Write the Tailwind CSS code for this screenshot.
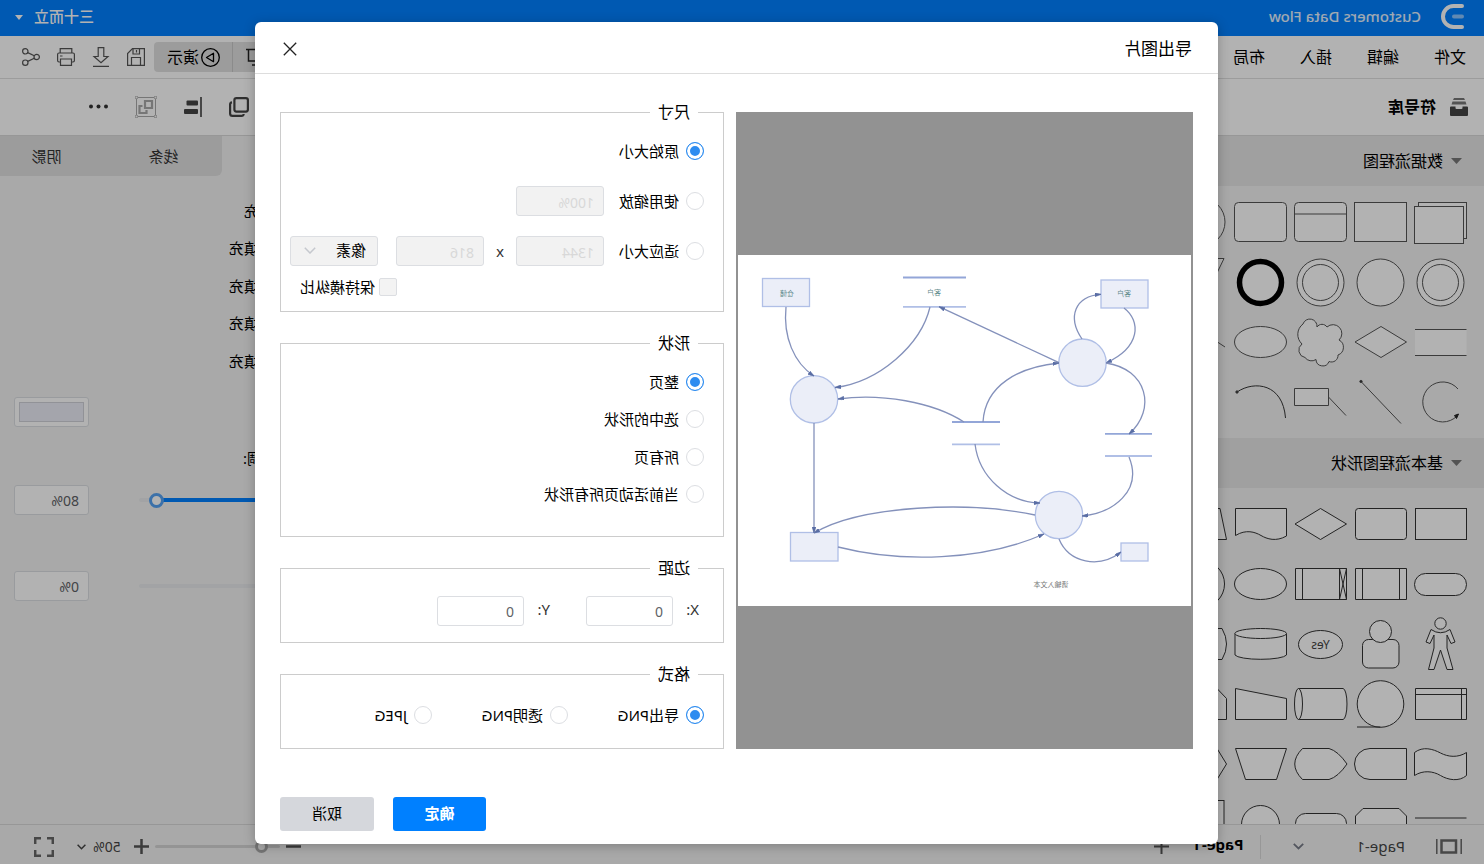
<!DOCTYPE html>
<html lang="zh-CN">
<head>
<meta charset="utf-8">
<meta name="viewport" content="width=device-width, initial-scale=1">
<title>导出图片</title>
<script src="https://cdn.jsdelivr.net/npm/@tailwindcss/browser@4"></script>
</head>
<body class="font-['Noto_Sans','Noto_Sans_CJK_SC',sans-serif] text-[15px] text-black">
<div class="relative flex h-screen -scale-x-100 flex-col overflow-hidden bg-white">

  <!-- Title bar -->
  <header class="flex h-9 shrink-0 items-center bg-[#0080ff] pr-[15px] pb-1 pl-5 text-white">
    <svg class="h-[25px] w-[23px]" viewBox="0 0 23 25" fill="none" stroke-linecap="round" stroke-width="4"><path d="M2 2H10.500A10.500 10.500 0 0 1 10.500 23H2" stroke="#fff"/><path d="M2 12.500H10" stroke="#8cc4ff"/></svg>
    <h1 class="ml-5 text-[15px] font-medium text-white/90">Customers Data Flow</h1>
    <button type="button" class="ml-auto flex items-center gap-[11px] font-medium">三十而立
      <svg class="mt-[3px] h-[5px] w-2" viewBox="0 0 8 5" fill="#fff"><path d="M0 0H8L4 5Z"/></svg>
    </button>
  </header>

  <!-- Menu bar -->
  <nav class="flex h-[43px] shrink-0 items-center border-b border-[#e0e0e0] pr-[22px] pl-[18px]">
    <div class="flex gap-[35px] text-base">
      <a href="#">文件</a><a href="#">编辑</a><a href="#">插入</a><a href="#">布局</a>
    </div>
    <div class="ml-auto flex h-[30px] overflow-hidden rounded bg-[#e0e0e0]">
      <button type="button" aria-label="放映" class="flex items-center border-r border-[#c8c8c8] pr-[13px] pl-3">
        <svg class="size-5" viewBox="0 0 20 20" fill="none" stroke="#222" stroke-width="1.500"><path d="M0 2.500H20M2.500 2.500V14H17.500V2.500M10 14V18M6 18H14"/></svg>
      </button>
      <button type="button" class="flex items-center gap-[2px] pr-[13px] pl-3 text-base">
        <svg class="size-[19px]" viewBox="0 0 19 19" fill="none" stroke="#000" stroke-width="1.300"><circle cx="9.500" cy="9.500" r="8.800"/><path d="M6.500 5.300V13.700L13.500 9.500Z" stroke-linejoin="round"/></svg>演示
      </button>
    </div>
    <div class="ml-[9px] flex gap-[17px]">
      <button type="button" aria-label="保存"><svg class="block size-[18px]" viewBox="0 0 18 18" fill="none" stroke="#555" stroke-width="1.200"><path d="M.6 .6H12.500L17.400 5.500V17.400H.6Z"/><path d="M5.500 .6V6H12V.6M8.500 2V4.500M4.500 17.400V9.500H13.500V17.400"/></svg></button>
      <button type="button" aria-label="下载"><svg class="block h-5 w-[18px]" viewBox="0 0 18 20" fill="none" stroke="#555" stroke-width="1.200"><path d="M6.200 .6H11.800V9.500H16L9 15.800L2 9.500H6.200Z M1 19.300H17"/></svg></button>
      <button type="button" aria-label="打印"><svg class="block size-[18px]" viewBox="0 0 18 18" fill="none" stroke="#555" stroke-width="1.200"><path d="M3.200 5V.6H14.800V5M3.500 14H2A1.400 1.400 0 0 1 .6 12.600V6.400A1.400 1.400 0 0 1 2 5H16A1.400 1.400 0 0 1 17.400 6.400V12.600A1.400 1.400 0 0 1 16 14H14.500M3.500 11H14.500V17.400H3.500Z M12.500 8H15"/></svg></button>
      <button type="button" aria-label="分享"><svg class="block size-[18px]" viewBox="0 0 18 18" fill="none" stroke="#555" stroke-width="1.200"><circle cx="3.300" cy="9" r="2.700"/><circle cx="14.700" cy="3.300" r="2.700"/><circle cx="14.700" cy="14.700" r="2.700"/><path d="M5.700 7.800L12.300 4.600M5.700 10.200L12.300 13.400"/></svg></button>
    </div>
  </nav>

  <!-- Tool bar -->
  <div class="flex h-[57px] shrink-0 items-center border-b border-[#d8d8d8] pr-[89px] pl-4">
    <svg class="size-[18px]" viewBox="0 0 18 18" fill="#444"><path d="M4 0H14L15 2H3Z" fill="#777"/><path d="M2.500 3.500H15.500L16.500 6.500H1.500Z" fill="#777"/><path d="M1 8.500H5.500V10Q5.500 11 6.500 11H11.500Q12.500 11 12.500 10V8.500H17Q18 8.500 18 9.500V17Q18 18 17 18H1Q0 18 0 17V9.500Q0 8.500 1 8.500Z"/></svg>
    <h2 class="ml-[14px] text-base font-bold">符号库</h2>
    <div class="ml-auto flex items-center gap-[27px]">
      <button type="button" aria-label="层叠"><svg class="block size-5" viewBox="0 0 20 20" fill="none" stroke="#444" stroke-width="2.200"><rect x="1.100" y="1.100" width="13.500" height="13.500" rx="2"/><path d="M17 5.300Q18.900 5.500 18.900 7.500V16.500Q18.900 18.900 16.500 18.900H7.500Q5.500 18.900 5.300 17"/></svg></button>
      <button type="button" aria-label="对齐"><svg class="block h-5 w-[18px]" viewBox="0 0 18 20" fill="#444"><path d="M0 0H2V20H0Z" fill="#666"/><rect x="4" y="3.500" width="11.500" height="5" rx="1"/><rect x="4" y="12" width="14" height="5" rx="1"/></svg></button>
      <button type="button" aria-label="组合"><svg class="block size-[22px]" viewBox="0 0 22 22" fill="none" stroke="#aaa"><path d="M3 1.500H19M3 20.500H19M1.500 3V19M20.500 3V19"/><circle cx="1.500" cy="1.500" r="1.300"/><circle cx="20.500" cy="1.500" r="1.300"/><circle cx="1.500" cy="20.500" r="1.300"/><circle cx="20.500" cy="20.500" r="1.300"/><path d="M5 5H12V12H5Z M14.500 10H17.500V17H10.500V14" stroke-width="2.200"/></svg></button>
      <button type="button" aria-label="更多"><svg class="block h-5 w-[19px]" viewBox="0 0 19 20" fill="#333"><circle cx="2" cy="9.500" r="2"/><circle cx="9.500" cy="9.500" r="2"/><circle cx="17" cy="9.500" r="2"/></svg></button>
    </div>
  </div>

  <main class="flex min-h-0 flex-1">
    <!-- Symbol library -->
    <aside class="w-[326px] shrink-0 overflow-hidden bg-[#f3f3f3]">
      <h3 class="flex h-[50px] items-center gap-2 bg-[#e5e5e5] pl-[22px] text-base">
        <svg class="h-[6px] w-[11px]" viewBox="0 0 11 6" fill="#777"><path d="M0 0H11L5.500 6Z"/></svg>数据流程图
      </h3>
      <div class="grid grid-cols-[repeat(5,60px)] py-[6px] pl-[13px] [&_svg]:size-[60px] [&_svg]:fill-white [&_svg]:stroke-[#555]">
        <svg viewBox="0 0 60 60"><rect x="4.500" y="10.500" width="48" height="36"/><rect x="7.500" y="14.500" width="49" height="37"/></svg>
        <svg viewBox="0 0 60 60"><rect x="4.500" y="10.500" width="52" height="39"/></svg>
        <svg viewBox="0 0 60 60"><rect x="4.500" y="10.500" width="52" height="39" rx="4"/><path d="M4.500 22H56.500"/></svg>
        <svg viewBox="0 0 60 60"><rect x="4.500" y="10.500" width="52" height="39" rx="4"/></svg>
        <svg viewBox="0 0 60 60"><circle cx="30" cy="30" r="24"/></svg>

        <svg viewBox="0 0 60 60"><circle cx="30.500" cy="30.500" r="23.500"/><circle cx="30.500" cy="30.500" r="18"/></svg>
        <svg viewBox="0 0 60 60"><circle cx="30.500" cy="30.500" r="23.500"/></svg>
        <svg viewBox="0 0 60 60"><circle cx="30.500" cy="30.500" r="23.500"/><circle cx="30.500" cy="30.500" r="18"/></svg>
        <svg viewBox="0 0 60 60"><circle cx="30.500" cy="30.500" r="21" stroke="#000" stroke-width="5.500"/></svg>
        <svg viewBox="0 0 60 60"><path d="M7 6.500H53L30 54Z"/></svg>

        <svg viewBox="0 0 60 60"><path d="M4.500 17.500H56V43.500H4.500Z" stroke="none"/><path d="M4.500 17.500H56M4.500 43.500H56"/></svg>
        <svg viewBox="0 0 60 60"><path d="M30 14.500L56 30L30 45.500L4.500 30Z"/></svg>
        <svg viewBox="0 0 60 60"><path d="M34 15A7.200 7.200 0 0 1 48 12A13 13 0 0 1 49 32A7.500 7.500 0 0 1 46 45.500A8 8 0 0 1 35 47.500A6.700 6.700 0 0 1 22 49.500A6.500 6.500 0 0 1 13 43A8.200 8.200 0 0 1 12 28A8.500 8.500 0 0 1 24 15A6 6 0 0 1 34 15Z"/></svg>
        <svg viewBox="0 0 60 60"><ellipse cx="30.500" cy="30" rx="26" ry="15.500"/></svg>
        <svg viewBox="0 0 60 60"><path d="M6 35L50 6" fill="none"/></svg>

        <svg viewBox="0 0 60 60"><path d="M13 17A20 20 0 1 1 14 44" fill="none"/><path d="M12.500 42L16.500 43.500L14.500 46.500Z" fill="#222" stroke="#222"/></svg>
        <svg viewBox="0 0 60 60"><path d="M50 9.500L10 51.500"/><circle cx="50" cy="9.500" r="1.200" fill="#333"/></svg>
        <svg viewBox="0 0 60 60"><path d="M22.500 16.500H56.500V33.500H22.500ZM22.500 25L5 43.500"/></svg>
        <svg viewBox="0 0 60 60"><path d="M54 20C36 8 8 12 5.500 46" fill="none" stroke="#333"/><circle cx="54" cy="20" r="1.200" fill="#222"/></svg>
        <svg viewBox="0 0 60 60"></svg>
      </div>

      <h3 class="flex h-[50px] items-center gap-2 bg-[#e5e5e5] pl-[22px] text-base">
        <svg class="h-[6px] w-[11px]" viewBox="0 0 11 6" fill="#777"><path d="M0 0H11L5.500 6Z"/></svg>基本流程图形状
      </h3>
      <div class="grid grid-cols-[repeat(5,60px)] py-[6px] pl-[13px] [&_svg]:size-[60px] [&_svg]:fill-white [&_svg]:stroke-[#333]">
        <svg viewBox="0 0 60 60"><rect x="4.500" y="14.500" width="51" height="31"/></svg>
        <svg viewBox="0 0 60 60"><rect x="4.500" y="14.500" width="51" height="31" rx="3"/></svg>
        <svg viewBox="0 0 60 60"><path d="M30.500 14.500L56 30L30.500 45.500L4.500 30Z"/></svg>
        <svg viewBox="0 0 60 60"><path d="M4.500 14.500H55.500V41.500C45 35 36 38 30 41.500S15 48 4.500 42Z"/></svg>
        <svg viewBox="0 0 60 60"><path d="M11 14.500H49L55.500 45.500H4.500Z"/></svg>

        <svg viewBox="0 0 60 60"><rect x="4.500" y="19.500" width="52" height="22" rx="11"/></svg>
        <svg viewBox="0 0 60 60"><path d="M4.500 14.500H55.500V45.500H4.500ZM11.500 14.500V45.500M48.500 14.500V45.500"/></svg>
        <svg viewBox="0 0 60 60"><path d="M4.500 14.500H55.500V45.500H4.500ZM11.500 14.500V45.500M48.500 14.500V45.500M4.500 14.500L11.500 45.500M11.500 14.500L4.500 45.500"/></svg>
        <svg viewBox="0 0 60 60"><ellipse cx="30.500" cy="30" rx="26" ry="15.500"/></svg>
        <svg viewBox="0 0 60 60"><circle cx="30" cy="30" r="23.500"/></svg>

        <svg viewBox="0 0 60 60"><circle cx="30.500" cy="9.500" r="5.700"/><path d="M21 15.500Q30.500 22 40 15.500L45 28L41 29.500L37 21L37 34L42.500 55.500H37L30.500 36L24 55.500H18L24 34V21L20 29.500L16 28Z"/></svg>
        <svg viewBox="0 0 60 60"><rect x="12" y="25.500" width="36.500" height="28.500" rx="6"/><circle cx="30.500" cy="17.500" r="11"/></svg>
        <svg viewBox="0 0 60 60"><ellipse cx="30.500" cy="30.500" rx="22" ry="14"/><text x="30.500" y="35" text-anchor="middle" font-size="12" fill="#444" stroke="none">Yes</text></svg>
        <svg viewBox="0 0 60 60"><path d="M4.500 19.500V41A26 5 0 0 0 56 41V19.500"/><ellipse cx="30.300" cy="19.500" rx="25.800" ry="5"/></svg>
        <svg viewBox="0 0 60 60"><path d="M9 14.500Q0 30 9 45.500H51Q60 30 51 14.500Z"/></svg>

        <svg viewBox="0 0 60 60"><path d="M4.500 14.500H55.500V45.500H4.500ZM4.500 20.500H55.500M9.500 14.500V45.500"/></svg>
        <svg viewBox="0 0 60 60"><circle cx="30.500" cy="30" r="23.300"/><path d="M30.500 53H54"/></svg>
        <svg viewBox="0 0 60 60"><path d="M8 14.500H52.500V45.500H8A4 15.500 0 0 1 8 14.500Z"/><ellipse cx="52.500" cy="30" rx="4" ry="15.500"/></svg>
        <svg viewBox="0 0 60 60"><path d="M55.500 14.500L4.500 24.500V45.500H55.500Z"/></svg>
        <svg viewBox="0 0 60 60"><path d="M14 14.500H46L55.500 24.500V45.500H4.500V24.500Z"/></svg>

        <svg viewBox="0 0 60 60"><path d="M4.500 18.500C13 24 23 23 30.500 19S48 12 56.500 18.500V41.500C48 36 38 37 30.500 41.500S12 48 4.500 41.500Z"/></svg>
        <svg viewBox="0 0 60 60"><path d="M4.500 14.500H41A15.500 15.500 0 0 1 41 45.500H4.500Z"/></svg>
        <svg viewBox="0 0 60 60"><path d="M22 14.500H48.500Q64 30 48.500 45.500H22Q13 43 4 30Q13 17 22 14.500Z"/></svg>
        <svg viewBox="0 0 60 60"><path d="M4.500 14.500H55.500L45.500 45.500H14.500Z"/></svg>
        <svg viewBox="0 0 60 60"><path d="M4.500 30L14 14.500H46L55.500 30L46 45.500H14Z"/></svg>

        <svg viewBox="0 0 60 60"><path d="M4.500 24H56"/></svg>
        <svg viewBox="0 0 60 60"><path d="M12 14.500H48L55.500 22V45.500H4.500V22Z"/></svg>
        <svg viewBox="0 0 60 60"><rect x="4.500" y="19.500" width="51" height="26" rx="10"/></svg>
        <svg viewBox="0 0 60 60"><circle cx="30.500" cy="30.500" r="19"/></svg>
        <svg viewBox="0 0 60 60"><rect x="7" y="6.500" width="46" height="46"/></svg>
      </div>
    </aside>

    <div class="flex-1 bg-white"></div>

    <!-- Format panel -->
    <aside class="w-[339px] shrink-0 bg-[#f3f3f3] pr-[14px]">
      <div role="tablist" class="-mr-[14px] flex h-10 text-[#333]">
        <button type="button" role="tab" class="w-[117px] shrink-0 text-black">填充</button>
        <div class="flex min-w-0 flex-1 overflow-hidden rounded-bl-md bg-[#e0e0e0]">
          <button type="button" role="tab" class="w-[117px] shrink-0">线条</button>
          <button type="button" role="tab" class="w-[117px] shrink-0">阴影</button>
        </div>
      </div>
      <div class="mt-4 flex h-[188px] flex-col pl-[25px] [&>label]:flex [&>label]:flex-1 [&>label]:items-center [&>label]:gap-[7px]">
        <label><input type="radio" name="fill" class="size-[18px]">无填充</label>
        <label><input type="radio" name="fill" class="size-[18px]" checked>纯色填充</label>
        <label><input type="radio" name="fill" class="size-[18px]">渐变填充</label>
        <label><input type="radio" name="fill" class="size-[18px]">图案填充</label>
        <label><input type="radio" name="fill" class="size-[18px]">图片填充</label>
      </div>
      <button type="button" aria-label="颜色" class="mt-[17px] ml-auto block h-[30px] w-[75px] rounded-[3px] border border-[#dcdee2] bg-white p-1">
        <span class="block h-5 border border-[#d0d2d8] bg-[#ebedf6]"></span>
      </button>
      <p class="mt-5 w-24 text-right leading-[22px]">色调:</p>
      <div class="mt-4 flex h-[30px] items-center justify-end">
        <input type="range" aria-label="色调" value="94" class="mr-[50px] h-1 w-[180px] appearance-none rounded bg-linear-to-r from-[#0080ff] from-90% to-[#e8eaec] to-90% [&::-webkit-slider-thumb]:size-[15px] [&::-webkit-slider-thumb]:appearance-none [&::-webkit-slider-thumb]:rounded-full [&::-webkit-slider-thumb]:border-[3px] [&::-webkit-slider-thumb]:border-[#57a3f3] [&::-webkit-slider-thumb]:bg-white">
        <input type="text" aria-label="色调值" value="80%" class="h-[30px] w-[75px] rounded-[3px] border border-[#dcdee2] bg-white px-[9px] text-sm text-[#606266]">
      </div>
      <div class="mt-14 flex h-[30px] items-center justify-end">
        <input type="range" aria-label="透明度" value="0" class="mr-[50px] h-1 w-[180px] appearance-none rounded bg-[#e8eaec] [&::-webkit-slider-thumb]:size-[15px] [&::-webkit-slider-thumb]:appearance-none [&::-webkit-slider-thumb]:rounded-full [&::-webkit-slider-thumb]:border-[3px] [&::-webkit-slider-thumb]:border-[#57a3f3] [&::-webkit-slider-thumb]:bg-white">
        <input type="text" aria-label="透明度值" value="0%" class="h-[30px] w-[75px] rounded-[3px] border border-[#dcdee2] bg-white px-[9px] text-sm text-[#606266]">
      </div>
    </aside>
  </main>

  <!-- Status bar -->
  <footer class="flex h-10 shrink-0 items-center border-t border-[#d8d8d8] bg-[#f3f3f3] pt-1 pr-[34px] pl-[22px] text-[#444]">
    <svg class="h-[15px] w-[26px]" viewBox="0 0 26 15" fill="none" stroke="#666" stroke-width="1.500"><path d="M.8 0V15M25.200 0V15"/><rect x="6" y="1.500" width="14.500" height="12" stroke-width="2.500"/></svg>
    <span class="ml-[31px]">Page-1</span>
    <button type="button" aria-label="页面列表" class="ml-[52px]"><svg class="block h-[7px] w-[11px]" viewBox="0 0 11 7" fill="none" stroke="#777c88" stroke-width="1.800"><path d="M.8 .8L5.500 5.500L10.200 .8"/></svg></button>
    <span class="ml-[32px] h-6 border-l border-[#d8d8d8]"></span>
    <span class="ml-[17px] pb-1 font-bold text-black">Page-1</span>
    <button type="button" aria-label="新建页面" class="ml-6"><svg class="block size-[15px]" viewBox="0 0 15 15" stroke="#555" stroke-width="2"><path d="M0 7.500H15M7.500 0V15"/></svg></button>
    <button type="button" aria-label="缩小" class="ml-auto"><svg class="block size-[15px]" viewBox="0 0 15 15" stroke="#555" stroke-width="2.500"><path d="M0 7.500H15"/></svg></button>
    <input type="range" aria-label="缩放" value="10" class="ml-[6px] h-[3px] w-[125px] appearance-none rounded bg-[#d5d5d5] [&::-webkit-slider-thumb]:size-[13px] [&::-webkit-slider-thumb]:appearance-none [&::-webkit-slider-thumb]:rounded-full [&::-webkit-slider-thumb]:border-[3px] [&::-webkit-slider-thumb]:border-[#a8a8a8] [&::-webkit-slider-thumb]:bg-[#f3f3f3]">
    <button type="button" aria-label="放大" class="ml-[6px]"><svg class="block size-[15px]" viewBox="0 0 15 15" stroke="#555" stroke-width="2.500"><path d="M0 7.500H15M7.500 0V15"/></svg></button>
    <button type="button" class="ml-[13px] flex items-center gap-[7px] text-sm">50%
      <svg class="h-[6px] w-[9px]" viewBox="0 0 9 6" fill="none" stroke="#444" stroke-width="1.500"><path d="M.6 .8L4.500 4.800L8.400 .8"/></svg></button>
    <button type="button" aria-label="全屏" class="ml-[23px]"><svg class="block size-5" viewBox="0 0 20 20" fill="none" stroke="#666" stroke-width="2.500"><path d="M1.200 7V1.200H7M13 1.200H18.800V7M18.800 13V18.800H13M7 18.800H1.200V13"/></svg></button>
  </footer>

  <!-- Export dialog -->
  <div class="absolute inset-0 flex items-center justify-center bg-black/30 pt-[2px] pl-[11px]">
    <form role="dialog" aria-labelledby="dialog-title" class="w-[963px] max-w-full rounded-md bg-white shadow-[0_2px_12px_rgba(0,0,0,0.25)]">
      <div class="flex h-[52px] items-center justify-between border-b border-[#ddd] pt-[2px] pr-[28px] pl-[26px]">
        <h2 id="dialog-title" class="text-[17px]">导出图片</h2>
        <button type="button" aria-label="关闭"><svg class="block size-[14px]" viewBox="0 0 14 14" stroke="#222" stroke-width="1.300"><path d="M.8 .8L13.200 13.200M13.200 .8L.8 13.200"/></svg></button>
      </div>

      <div class="grid grid-cols-[457fr_444fr] gap-3 px-[25px] pt-[26px]">
        <!-- Preview -->
        <div class="mt-3 flex flex-col justify-center bg-[#929292] px-[2px]">
          <svg class="block w-full bg-white" viewBox="0 0 453 351" fill="none" stroke-width="1.300">
            <defs><marker id="arrow" viewBox="0 0 6 4" refX="6" refY="2" markerWidth="6" markerHeight="4" markerUnits="userSpaceOnUse" orient="auto"><path d="M0 0L6 2L0 4Z" fill="#5a6ea5" stroke="#5a6ea5" stroke-width=".5"/></marker></defs>
            <g fill="#ebeef8" stroke="#b0bfe6">
              <rect x="381.500" y="23.500" width="47" height="28"/>
              <rect x="43" y="25" width="47" height="28"/>
              <rect x="353" y="277.500" width="47.500" height="28.500"/>
              <rect x="43" y="288" width="27" height="18"/>
              <circle cx="108.500" cy="107.700" r="23.700"/><circle cx="377" cy="144.300" r="23.700"/><circle cx="132" cy="260" r="23.700"/>
            </g>
            <g stroke="#93a6d8" stroke-width="1.800"><path d="M225 22.500H288M191 167H239M39 178.800H86"/><path d="M225 51.800H288M191 189.300H239M39 201H86" stroke="#b0bfe6"/></g>
            <g stroke="#8491bb" marker-end="url(#arrow)">
              <path d="M405 52C408 82 397 108 377 121" marker-end="url(#arrow)"/>
              <path d="M261 52C270 90 312 127 356 132.500" marker-end="url(#arrow)"/>
              <path d="M132 107.700L252 51.700" marker-end="url(#arrow)"/>
              <path d="M227 167C258 147 310 138 353 144" marker-end="url(#arrow)"/>
              <path d="M208 167C206 130 172 112 132 108" marker-end="url(#arrow)"/>
              <path d="M216 189C212 222 184 247 151 248" marker-end="url(#arrow)"/>
              <path d="M109 84C124 62 116 41 90 39.300" marker-end="url(#arrow)"/>
              <path d="M67 53C50 66 50 92 85 108" marker-end="url(#arrow)"/>
              <path d="M85 108C44 114 34 154 62 179" marker-end="url(#arrow)"/>
              <path d="M62 202C48 236 78 258 109 261" marker-end="url(#arrow)"/>
              <path d="M156 260C222 246 330 250 377 278" marker-end="url(#arrow)"/>
              <path d="M353 292C290 308 208 306 147 279" marker-end="url(#arrow)"/>
              <path d="M377 168V278" marker-end="url(#arrow)"/>
              <path d="M132 284C122 308 92 314 70 297" marker-end="url(#arrow)"/>
            </g>
            <g font-size="7" text-anchor="middle" fill="#5f8a8c">
              <text x="404" y="41">仓储</text><text x="257" y="40">客户</text><text x="67" y="41">客户</text>
              <text x="140" y="332" fill="#777">请输入文本</text>
            </g>
          </svg>
        </div>

        <!-- Options -->
        <div class="flex flex-col gap-[19px]">
          <fieldset class="border border-[#ccc] pr-[9px] pb-[15px] pl-[19px]">
            <legend class="ml-[6px] px-2 text-base leading-6">尺寸</legend>
            <div class="mt-3 flex h-[30px] items-center">
              <label class="flex items-center gap-[7px]"><input type="radio" name="size" checked class="size-[18px] appearance-none rounded-full border border-[#dcdee2] bg-white checked:border-[#2d8cf0] checked:bg-[#2d8cf0] checked:shadow-[inset_0_0_0_3px_#fff]">原始大小</label>
            </div>
            <div class="mt-5 flex h-[30px] items-center">
              <label class="flex items-center gap-[7px]"><input type="radio" name="size" class="size-[18px] appearance-none rounded-full border border-[#dcdee2] bg-white checked:border-[#2d8cf0] checked:bg-[#2d8cf0] checked:shadow-[inset_0_0_0_3px_#fff]">使用缩放</label>
              <input type="text" aria-label="缩放比例" value="100%" disabled class="ml-[15px] h-[30px] w-[88px] rounded-[3px] border border-[#dcdee2] bg-[#f2f2f2] px-[9px] pt-[2px] text-sm text-[#d8d8d8]">
            </div>
            <div class="mt-5 flex h-[30px] items-center">
              <label class="flex items-center gap-[7px]"><input type="radio" name="size" class="size-[18px] appearance-none rounded-full border border-[#dcdee2] bg-white checked:border-[#2d8cf0] checked:bg-[#2d8cf0] checked:shadow-[inset_0_0_0_3px_#fff]">适应大小</label>
              <input type="text" aria-label="宽度" value="1344" disabled class="ml-[15px] h-[30px] w-[88px] rounded-[3px] border border-[#dcdee2] bg-[#f2f2f2] px-[9px] pt-[2px] text-sm text-[#d8d8d8]">
              <span class="w-8 text-center text-[#333]">x</span>
              <input type="text" aria-label="高度" value="816" disabled class="h-[30px] w-[88px] rounded-[3px] border border-[#dcdee2] bg-[#f2f2f2] px-[9px] pt-[2px] text-sm text-[#d8d8d8]">
              <div class="relative ml-auto">
                <select aria-label="单位" disabled class="block h-[30px] w-[88px] appearance-none rounded-[3px] border border-[#dcdee2] bg-[#f2f2f2] pb-[2px] pl-[11px] text-black opacity-100"><option>像素</option></select>
                <svg class="absolute top-[11px] right-[14px] h-[7px] w-3" viewBox="0 0 12 7" fill="none" stroke="#c5c8ce" stroke-width="1.500"><path d="M.8 .8L6 6L11.200 .8"/></svg>
              </div>
            </div>
            <label class="mt-3 mr-[10px] flex h-[18px] items-center justify-end gap-1"><input type="checkbox" disabled class="size-[18px] appearance-none rounded-[2px] border border-[#dcdee2] bg-[#f3f3f3]">保持横纵比</label>
          </fieldset>

          <fieldset class="border border-[#ccc] pb-[23px] pl-[19px]">
            <legend class="ml-[6px] px-2 text-base leading-6">形状</legend>
            <div class="mt-2 grid h-[150px] grid-rows-4">
              <label class="flex items-center gap-[7px]"><input type="radio" name="shape" checked class="size-[18px] appearance-none rounded-full border border-[#dcdee2] bg-white checked:border-[#2d8cf0] checked:bg-[#2d8cf0] checked:shadow-[inset_0_0_0_3px_#fff]">整页</label>
              <label class="flex items-center gap-[7px]"><input type="radio" name="shape" class="size-[18px] appearance-none rounded-full border border-[#dcdee2] bg-white checked:border-[#2d8cf0] checked:bg-[#2d8cf0] checked:shadow-[inset_0_0_0_3px_#fff]">选中的形状</label>
              <label class="flex items-center gap-[7px]"><input type="radio" name="shape" class="size-[18px] appearance-none rounded-full border border-[#dcdee2] bg-white checked:border-[#2d8cf0] checked:bg-[#2d8cf0] checked:shadow-[inset_0_0_0_3px_#fff]">所有页</label>
              <label class="flex items-center gap-[7px]"><input type="radio" name="shape" class="size-[18px] appearance-none rounded-full border border-[#dcdee2] bg-white checked:border-[#2d8cf0] checked:bg-[#2d8cf0] checked:shadow-[inset_0_0_0_3px_#fff]">当前活动页所有形状</label>
            </div>
          </fieldset>

          <fieldset class="border border-[#ccc] pb-4 pl-6">
            <legend class="ml-[1px] px-2 text-base leading-6">边距</legend>
            <div class="mt-4 flex items-center text-[#333]">
              <label for="margin-x" class="w-[26px] pb-1">X:</label>
              <input id="margin-x" type="text" value="0" class="h-[30px] w-[87px] rounded-[3px] border border-[#dcdee2] bg-white px-[9px] text-sm text-[#606266]">
              <label for="margin-y" class="ml-9 w-[26px] pb-1">Y:</label>
              <input id="margin-y" type="text" value="0" class="h-[30px] w-[87px] rounded-[3px] border border-[#dcdee2] bg-white px-[9px] text-sm text-[#606266]">
            </div>
          </fieldset>

          <fieldset class="border border-[#ccc] pb-6 pl-[19px]">
            <legend class="ml-[6px] px-2 text-base leading-6">格式</legend>
            <div class="mt-5 flex h-[18px]">
              <label class="flex w-[136px] items-center gap-[7px]"><input type="radio" name="format" checked class="size-[18px] appearance-none rounded-full border border-[#dcdee2] bg-white checked:border-[#2d8cf0] checked:bg-[#2d8cf0] checked:shadow-[inset_0_0_0_3px_#fff]">导出PNG</label>
              <label class="flex w-[136px] items-center gap-[7px]"><input type="radio" name="format" class="size-[18px] appearance-none rounded-full border border-[#dcdee2] bg-white checked:border-[#2d8cf0] checked:bg-[#2d8cf0] checked:shadow-[inset_0_0_0_3px_#fff]">透明PNG</label>
              <label class="flex w-[136px] items-center gap-[7px]"><input type="radio" name="format" class="size-[18px] appearance-none rounded-full border border-[#dcdee2] bg-white checked:border-[#2d8cf0] checked:bg-[#2d8cf0] checked:shadow-[inset_0_0_0_3px_#fff]">JPEG</label>
            </div>
          </fieldset>
        </div>
      </div>

      <div class="mt-12 flex justify-end gap-[19px] px-[25px] pb-[13px]">
        <button type="submit" class="h-[34px] w-[93px] rounded-[3px] bg-[#0080ff] pb-[2px] font-bold text-white">确定</button>
        <button type="button" class="h-[34px] w-[94px] rounded-[3px] bg-[#d5d7dc] pb-[2px]">取消</button>
      </div>
    </form>
  </div>
</div>
</body>
</html>
